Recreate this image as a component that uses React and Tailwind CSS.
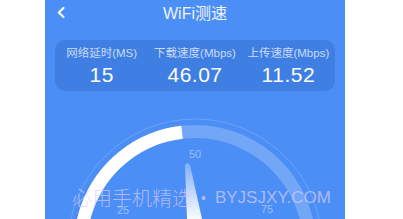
import React from 'react';

const stats = [
  { label: '网络延时(MS)', value: '15' },
  { label: '下载速度(Mbps)', value: '46.07' },
  { label: '上传速度(Mbps)', value: '11.52' },
];

const cjk = { fontFamily: '"Liberation Sans", "Noto Sans CJK SC", sans-serif' };

// gauge: center (150,146) in svg coords, 270° sweep
function arcPath(cx, cy, r, a0, a1) {
  const p = (a) => {
    const rad = ((a - 90) * Math.PI) / 180;
    return [cx + r * Math.cos(rad), cy + r * Math.sin(rad)];
  };
  const [x0, y0] = p(a0);
  const [x1, y1] = p(a1);
  const large = a1 - a0 > 180 ? 1 : 0;
  return `M ${x0} ${y0} A ${r} ${r} 0 ${large} 1 ${x1} ${y1}`;
}

function Gauge() {
  const cx = 150;
  const cy = 146;
  return (
    <svg width="300" height="119" viewBox="0 0 300 119" className="block">
      <defs>
        <linearGradient id="needle" x1="0" y1="0" x2="0" y2="1">
          <stop offset="0" stopColor="#ffffff" stopOpacity="0.3" />
          <stop offset="0.65" stopColor="#ffffff" stopOpacity="0.95" />
          <stop offset="1" stopColor="#ffffff" stopOpacity="1" />
        </linearGradient>
      </defs>
      <circle cx={cx} cy={cy} r="127" fill="none" stroke="#ffffff" strokeOpacity="0.18" strokeWidth="1" />
      <path d={arcPath(cx, cy, 114.5, -135, 135)} fill="none" stroke="#ffffff" strokeOpacity="0.22" strokeWidth="13" />
      <path d={arcPath(cx, cy, 114.5, -135, -6.5)} fill="none" stroke="#ffffff" strokeWidth="13" />
      <g fill="#ffffff" fillOpacity="0.45" fontSize="11" style={{ fontFamily: '"Liberation Sans", sans-serif' }} textAnchor="middle">
        <text x="150" y="58">50</text>
        <text x="78" y="114">25</text>
        <text x="222" y="113">75</text>
      </g>
      <path d="M140 65 Q142.5 61 145 65 L163 146 L143 146 Z" fill="url(#needle)" />
    </svg>
  );
}

export default function App() {
  return (
    <div className="w-[403px] h-[219px] bg-white overflow-hidden">
      <div className="relative ml-[45px] w-[300px] h-[219px] bg-[#4b8ef5] flex flex-col overflow-hidden" style={cjk}>
        <div className="h-[28px] grid grid-cols-[40px_1fr_40px] items-center">
          <svg width="8" height="11" viewBox="0 0 8 11" className="ml-[12px] mt-[-4px]">
            <path d="M6.5 1 L1.8 5.5 L6.5 10" fill="none" stroke="#ffffff" strokeWidth="2" strokeLinecap="round" strokeLinejoin="round" />
          </svg>
          <div className="text-center text-[16px] text-white/90 leading-none">WiFi测速</div>
          <div />
        </div>

        <div className="mx-[10px] mt-[12px] h-[51px] rounded-[10px] bg-[#3f7ee3] grid grid-cols-3">
          {stats.map((s) => (
            <div key={s.label} className="flex flex-col items-center pt-[7px]">
              <div className="text-[11.5px] leading-[13px] text-[#c9dcfa]">{s.label}</div>
              <div className="mt-[3px] text-[21px] leading-[23px] text-white tracking-[0.5px]">{s.value}</div>
            </div>
          ))}
        </div>

        <div className="mt-[9px]">
          <Gauge />
        </div>

        <div className="absolute left-[27px] top-[186px] flex items-center whitespace-nowrap text-[#dccdf7]/70">
          <span className="text-[20px] leading-[24px] font-light" style={{ fontFamily: '"Noto Sans CJK SC", sans-serif' }}>必用手机精选</span>
          <span className="text-[14px] mx-[9px]">•</span>
          <span className="text-[17px] leading-[24px]" style={{ fontFamily: '"Liberation Sans", sans-serif' }}>BYJSJXY.COM</span>
        </div>
      </div>
    </div>
  );
}
